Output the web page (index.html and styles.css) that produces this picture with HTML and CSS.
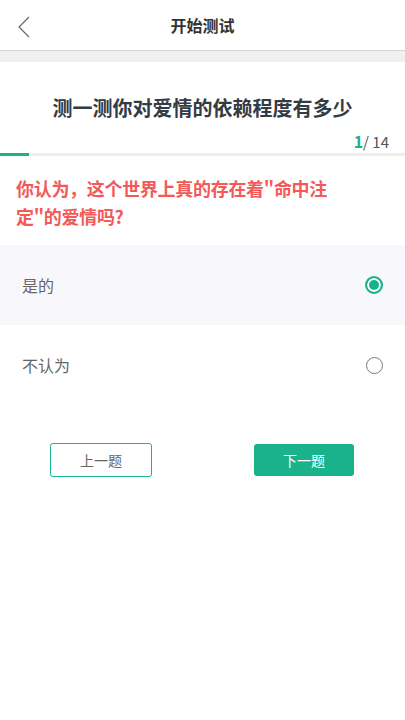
FILE: index.html
```html
<!DOCTYPE html>
<html lang="zh-CN">
<head>
    <meta charset="UTF-8">
    <title>开始测试</title>
    <link rel="stylesheet" href="styles.css">
</head>
<body>
    <div class="header">
        <span class="back">
            <svg width="14" height="22" viewBox="0 0 14 22">
                <polyline points="12,1 2,11 12,21" fill="none" stroke="#666" stroke-width="1.2"/>
            </svg>
        </span>
        <span class="header-title">开始测试</span>
    </div>
    <div class="gap"></div>

    <h1 class="quiz-title">测一测你对爱情的依赖程度有多少</h1>
    <div class="counter"><span class="current">1</span>/ 14</div>
    <div class="progress">
        <div class="progress-fill" style="width: 29px;"></div>
    </div>

    <div class="question">你认为，这个世界上真的存在着"命中注定"的爱情吗?</div>

    <div class="options">
        <div class="option selected">
            <span>是的</span>
            <span class="radio"></span>
        </div>
        <div class="option">
            <span>不认为</span>
            <span class="radio"></span>
        </div>
    </div>

    <div class="actions">
        <button class="btn btn-prev">上一题</button>
        <button class="btn btn-next">下一题</button>
    </div>
</body>
</html>
```

FILE: styles.css
```css
body {
    margin: 0;
    background-color: #fff;
    font-family: "Noto Sans CJK SC", "Noto Sans", sans-serif;
    color: #333;
}
.header {
    height: 50px;
    display: flex;
    align-items: center;
    justify-content: center;
    position: relative;
    border-bottom: 1px solid #d4d4d4;
}
.back {
    position: absolute;
    left: 17px;
    top: 16px;
}
.header-title {
    font-size: 16px;
    font-weight: bold;
    color: #333;
}
.gap {
    height: 11px;
    background-color: #f0f0f0;
}
.quiz-title {
    margin: 30px 0 0;
    text-align: center;
    font-size: 20px;
    font-weight: bold;
    color: #333b44;
    line-height: 32px;
}
.counter {
    text-align: right;
    padding-right: 16px;
    margin-top: 7px;
    font-size: 15px;
    line-height: 20px;
    color: #555;
}
.counter .current {
    color: #1ab28a;
    font-size: 16px;
    font-weight: bold;
}
.progress {
    height: 3px;
    background-color: #eee;
    margin-top: 1px;
}
.progress-fill {
    height: 3px;
    background-color: #1ab28a;
}
.question {
    padding: 18px 40px 0 16px;
    font-size: 18px;
    font-weight: bold;
    line-height: 28px;
    letter-spacing: -0.3px;
    color: #f25a5a;
}
.options {
    margin-top: 15px;
}
.option {
    height: 80px;
    display: flex;
    align-items: center;
    justify-content: space-between;
    padding: 0 22px 0 22px;
    font-size: 16px;
    color: #666;
}
.option.selected {
    background-color: #f8f8fc;
}
.radio {
    width: 17px;
    height: 17px;
    border: 1px solid #777;
    border-radius: 50%;
    box-sizing: border-box;
}
.option.selected .radio {
    border: 2px solid #1ab28a;
    background-color: #1ab28a;
    box-shadow: inset 0 0 0 2px #fff;
    width: 18px;
    height: 18px;
}
.actions {
    display: flex;
    justify-content: space-between;
    padding: 38px 51px 0 50px;
}
.btn {
    width: 102px;
    height: 34px;
    border-radius: 3px;
    font-family: "Noto Sans CJK SC", sans-serif;
    font-size: 14px;
    cursor: pointer;
}
.btn-prev {
    background-color: #fff;
    border: 1px solid #1ab28a;
    color: #666;
}
.btn-next {
    background-color: #1ab28a;
    border: none;
    color: #fff;
    width: 100px;
    height: 32px;
    margin-top: 1px;
}
```
